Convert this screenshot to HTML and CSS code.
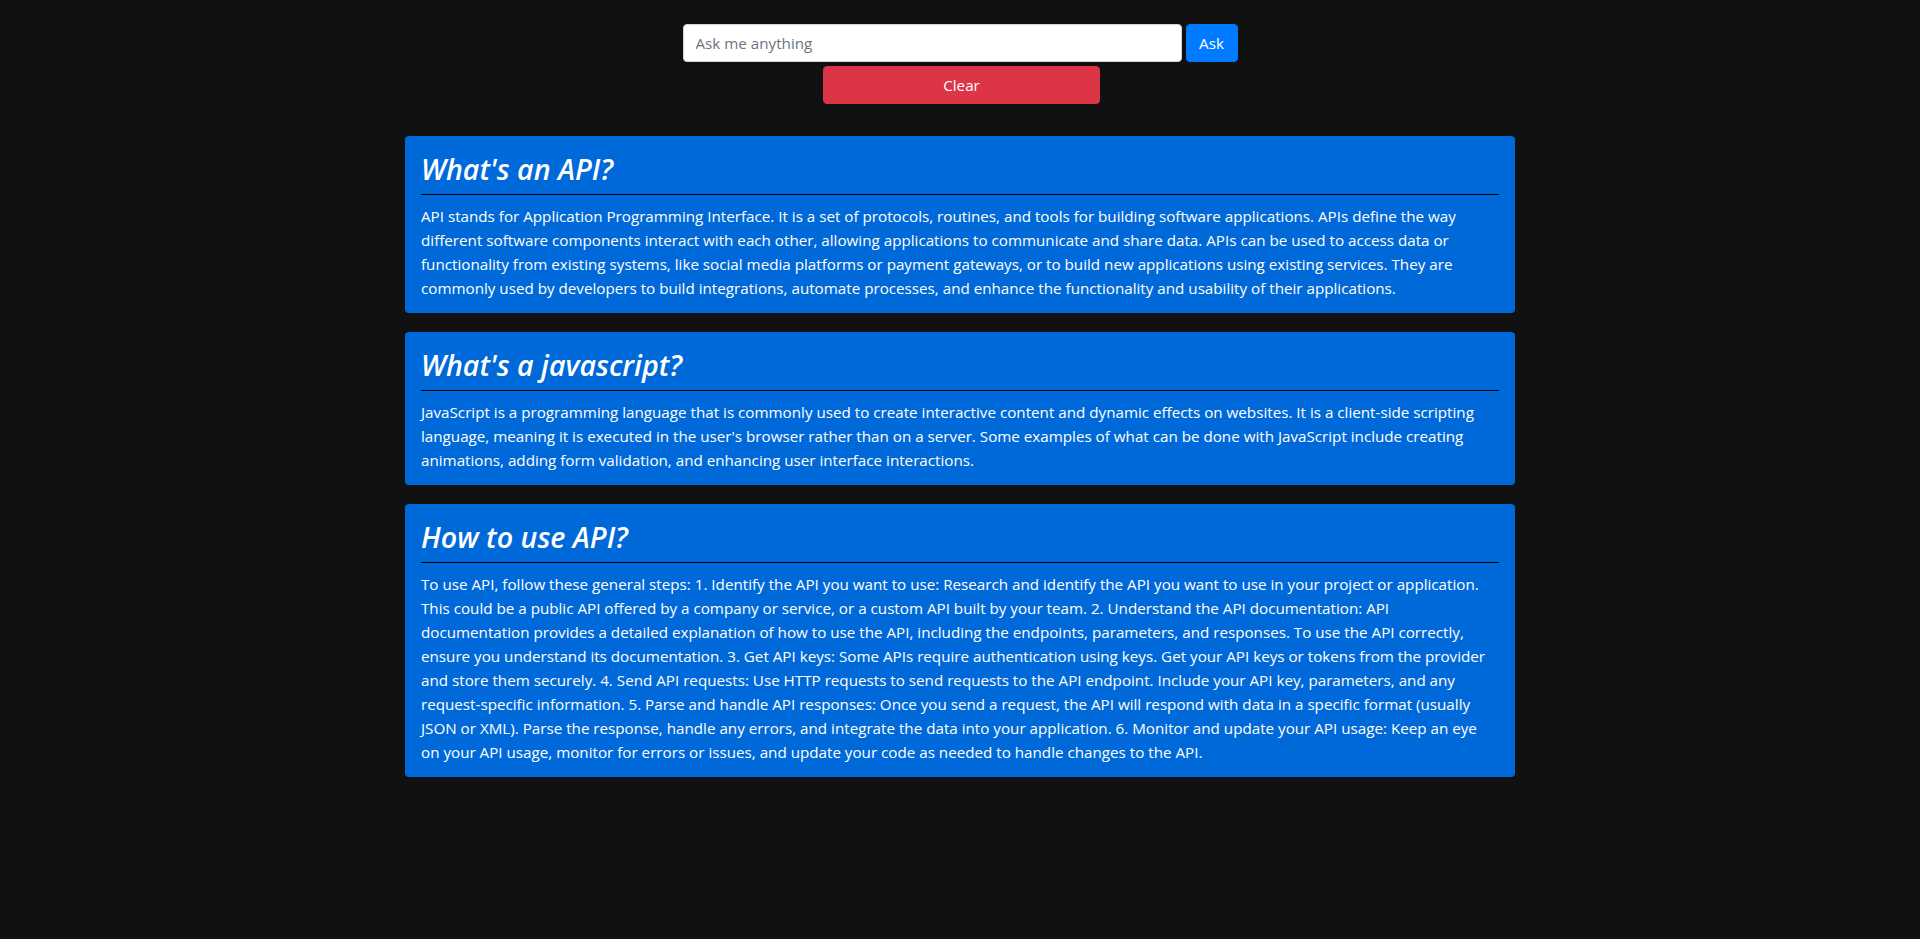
FILE: index.html
```html
<!DOCTYPE html>
<html lang="en">
<head>
<meta charset="utf-8">
<title>Ask me anything</title>
<link rel="stylesheet" href="styles.css">
</head>
<body>
<div class="ask">
  <form class="ask-form">
    <div class="ask-row">
      <input class="ask-input" type="text" placeholder="Ask me anything">
      <button class="btn btn-primary" type="button">Ask</button>
    </div>
    <button class="btn btn-danger btn-clear" type="button">Clear</button>
  </form>
</div>
<div class="container">
  <div class="card">
    <h3 class="card-title">What's an API?</h3>
    <p class="card-text">API stands for Application Programming Interface. It is a set of protocols, routines, and tools for building software applications. APIs define the way different software components interact with each other, allowing applications to communicate and share data. APIs can be used to access data or functionality from existing systems, like social media platforms or payment gateways, or to build new applications using existing services. They are commonly used by developers to build integrations, automate processes, and enhance the functionality and usability of their applications.</p>
  </div>
  <div class="card">
    <h3 class="card-title">What's a javascript?</h3>
    <p class="card-text">JavaScript is a programming language that is commonly used to create interactive content and dynamic effects on websites. It is a client-side scripting language, meaning it is executed in the user's browser rather than on a server. Some examples of what can be done with JavaScript include creating animations, adding form validation, and enhancing user interface interactions.</p>
  </div>
  <div class="card">
    <h3 class="card-title">How to use API?</h3>
    <p class="card-text">To use API, follow these general steps: 1. Identify the API you want to use: Research and identify the API you want to use in your project or application. This could be a public API offered by a company or service, or a custom API built by your team. 2. Understand the API documentation: API documentation provides a detailed explanation of how to use the API, including the endpoints, parameters, and responses. To use the API correctly, ensure you understand its documentation. 3. Get API keys: Some APIs require authentication using keys. Get your API keys or tokens from the provider and store them securely. 4. Send API requests: Use HTTP requests to send requests to the API endpoint. Include your API key, parameters, and any request-specific information. 5. Parse and handle API responses: Once you send a request, the API will respond with data in a specific format (usually JSON or XML). Parse the response, handle any errors, and integrate the data into your application. 6. Monitor and update your API usage: Keep an eye on your API usage, monitor for errors or issues, and update your code as needed to handle changes to the API.</p>
  </div>
</div>
</body>
</html>
```
FILE: styles.css
```css
html, body {
  margin: 0;
  padding: 0;
}
body {
  background: #111111;
  color: #fff;
  font-family: "Open Sans", "Noto Sans", sans-serif;
  font-size: 15.2px;
  line-height: 1.5;
  min-height: 939px;
}
.ask {
  display: flex;
  justify-content: center;
  padding-top: 24px;
}
.ask-form {
  display: flex;
  flex-direction: column;
  align-items: center;
  gap: 4px;
  margin: 0;
}
.ask-row {
  display: flex;
  gap: 4px;
}
.ask-input {
  width: 499px;
  height: 38px;
  box-sizing: border-box;
  padding: 6px 12px;
  border: 1px solid #ced4da;
  border-radius: 4px;
  background: #fff;
  color: #495057;
  font-family: inherit;
  font-size: 15.2px;
}
.ask-input::placeholder {
  color: #6c757d;
}
.btn {
  height: 38px;
  box-sizing: border-box;
  padding: 6px 12px;
  border: 1px solid transparent;
  border-radius: 4px;
  color: #fff;
  font-family: inherit;
  font-size: 15.2px;
  cursor: pointer;
}
.btn-primary {
  background: #007bff;
  border-color: #007bff;
  width: 52px;
}
.btn-danger {
  background: #dc3545;
  border-color: #dc3545;
}
.btn-clear {
  width: 277px;
  margin-left: 3px;
}
.container {
  width: 1110px;
  margin: 32px auto 0;
  display: flex;
  flex-direction: column;
  gap: 19px;
}
.card {
  background: #0069d9;
  border-radius: 4px;
  padding: 16px 16px 13px;
}
.card-title {
  margin: 0 0 9px;
  padding-bottom: 8px;
  border-bottom: 1px solid #000;
  font-size: 28.6px;
  line-height: 34px;
  font-style: italic;
  font-weight: 600;
}
.card-text {
  margin: 0;
  font-size: 15.2px;
  line-height: 24px;
}
```
